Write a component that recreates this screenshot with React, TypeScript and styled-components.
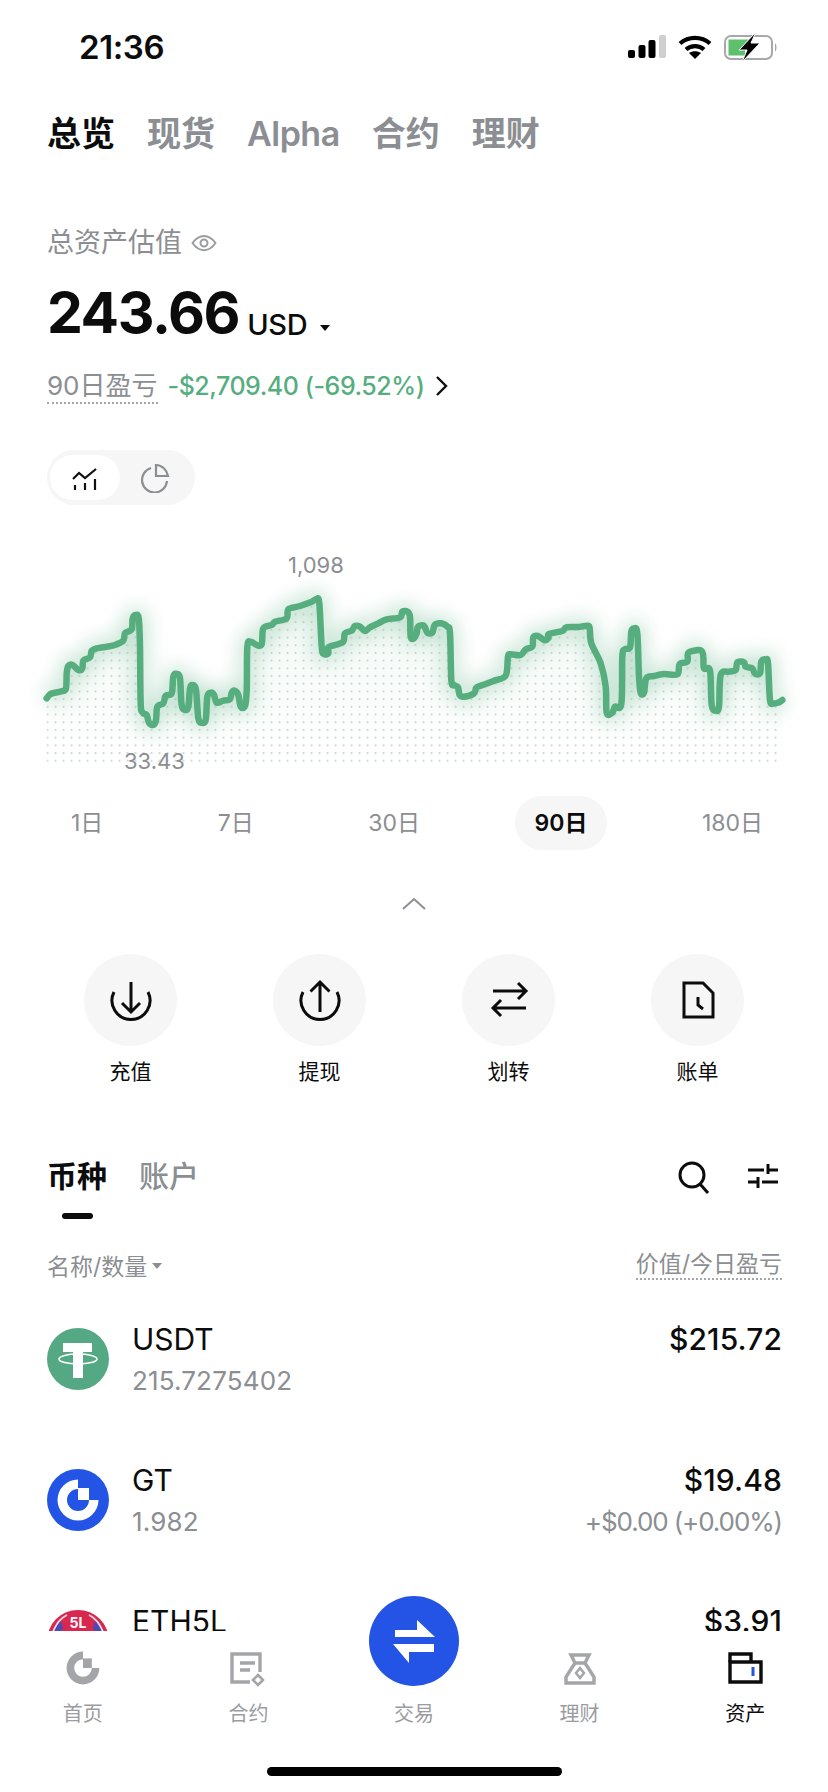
import styled, { createGlobalStyle } from "styled-components";

const GlobalStyle = createGlobalStyle`
	html, body {
		margin: 0;
		padding: 0;
		background: #fff;
	}
	body {
		font-family: Inter, "Noto Sans CJK SC", sans-serif;
		color: #0c0c0c;
	}
`;

const GRAY = "#8b8e92";
const GREEN = "#56ae7f";
const BLUE = "#2354e6";

const Page = styled("div")`
	width: 828px;
	height: 1792px;
	display: flex;
	flex-direction: column;
	position: relative;
	overflow: hidden;
	background: #fff;
`;

const Scroll = styled("main")`
	flex: 1;
	min-height: 0;
`;

const StatusBar = styled("div")`
	height: 92px;
	display: flex;
	align-items: center;
	justify-content: space-between;
	padding: 2px 50px 0 79px;
	box-sizing: border-box;
`;

const Time = styled("span")`
	font-size: 33px;
	font-weight: 600;
	letter-spacing: -0.4px;
`;

const StatusIcons = styled("div")`
	display: flex;
	align-items: center;
	gap: 12px;
`;

const TopTabs = styled("nav")`
	height: 84px;
	display: flex;
	align-items: center;
	gap: 32px;
	padding: 0 47px;
`;

const TopTab = styled("span")<{ $active?: boolean; $latin?: boolean }>`
	font-size: 34px;
	font-weight: ${({ $active }) => ($active ? 700 : 600)};
	color: ${({ $active }) => ($active ? "#0c0c0c" : GRAY)};
	line-height: 44px;
	letter-spacing: ${({ $latin }) => ($latin ? "-0.5px" : "0")};
`;

const Summary = styled("section")`
	padding: 49px 47px 0;
`;

const TotalLabel = styled("div")`
	display: flex;
	align-items: center;
	gap: 9px;
	font-size: 27px;
	line-height: 36px;
	color: ${GRAY};
`;

const AmountRow = styled("div")`
	display: flex;
	align-items: baseline;
	gap: 8px;
	height: 68px;
	line-height: 68px;
	margin-top: 18px;
`;

const Amount = styled("span")`
	font-size: 57px;
	font-weight: 700;
	letter-spacing: -1.4px;
`;

const Currency = styled("span")`
	font-size: 29px;
	font-weight: 500;
	transform: translateY(2px);
	letter-spacing: -0.3px;
`;

const Caret = styled("i")<{ $size: number; $color: string; $shift: number }>`
	display: inline-block;
	width: 0;
	height: 0;
	margin-left: ${({ $size }) => $size}px;
	border-left: ${({ $size }) => $size}px solid transparent;
	border-right: ${({ $size }) => $size}px solid transparent;
	border-top: ${({ $size }) => $size + 1}px solid ${({ $color }) => $color};
	transform: translateY(${({ $shift }) => $shift}px);
`;

const PnlRow = styled("div")`
	display: flex;
	align-items: center;
	gap: 10px;
	height: 36px;
	margin-top: 21px;
	font-size: 26px;
`;

const DottedLabel = styled("span")`
	color: ${GRAY};
	border-bottom: 2px dotted #a4a6a9;
	line-height: 33px;
`;

const PnlValue = styled("span")`
	color: ${GREEN};
	font-weight: 500;
	font-size: 25px;
	letter-spacing: -0.45px;
`;

const ViewToggle = styled("div")`
	width: 148px;
	height: 55px;
	margin-top: 46px;
	padding: 5px 3px;
	box-sizing: border-box;
	display: flex;
	align-items: stretch;
	background: #f6f6f6;
	border-radius: 28px;
`;

const ToggleItem = styled("div")<{ $active?: boolean }>`
	width: 70px;
	display: flex;
	align-items: center;
	justify-content: center;
	border-radius: 23px;
	background: ${({ $active }) => ($active ? "#fff" : "transparent")};
`;

const ChartBox = styled("div")`
	position: relative;
	height: 260px;
	margin-top: 25px;
	svg {
		display: block;
	}
`;

const ChartLabel = styled("span")<{ $left: number; $top: number }>`
	position: absolute;
	left: ${({ $left }) => $left}px;
	top: ${({ $top }) => $top}px;
	font-size: 22px;
	line-height: 28px;
	color: ${GRAY};
`;

const Ranges = styled("div")`
	height: 54px;
	margin-top: 6px;
	padding: 0 45px 0 51px;
	display: flex;
	justify-content: space-between;
`;

const Range = styled("span")<{ $active?: boolean }>`
	padding: 0 20px 4px;
	display: flex;
	align-items: center;
	border-radius: 27px;
	font-size: 23px;
	font-weight: ${({ $active }) => ($active ? 600 : 400)};
	color: ${({ $active }) => ($active ? "#0c0c0c" : GRAY)};
	background: ${({ $active }) => ($active ? "#f6f6f6" : "transparent")};
`;

const Collapse = styled("div")`
	height: 40px;
	margin-top: 34px;
	display: flex;
	align-items: center;
	justify-content: center;
`;

const Actions = styled("div")`
	display: grid;
	grid-template-columns: repeat(4, 189px);
	margin-top: 30px;
	padding-left: 36px;
`;

const Action = styled("div")`
	display: flex;
	flex-direction: column;
	align-items: center;
	gap: 11px;
	font-size: 21px;
	line-height: 30px;
`;

const ActionCircle = styled("div")`
	width: 93px;
	height: 92px;
	display: flex;
	align-items: center;
	justify-content: center;
	background: #f6f6f6;
	border-radius: 50%;
`;

const AssetHeader = styled("div")`
	height: 64px;
	margin-top: 68px;
	padding: 0 50px 0 47px;
	display: flex;
	justify-content: space-between;
`;

const AssetTabs = styled("div")`
	display: flex;
	gap: 32px;
`;

const AssetTab = styled("div")<{ $active?: boolean }>`
	position: relative;
	font-size: 30px;
	line-height: 42px;
	height: 42px;
	font-weight: ${({ $active }) => ($active ? 600 : 500)};
	color: ${({ $active }) => ($active ? "#0c0c0c" : GRAY)};
	&::after {
		content: "";
		display: ${({ $active }) => ($active ? "block" : "none")};
		position: absolute;
		left: 15px;
		top: 58px;
		width: 31px;
		height: 6px;
		border-radius: 3px;
		background: #0c0c0c;
	}
`;

const AssetTools = styled("div")`
	display: flex;
	align-items: flex-start;
	gap: 38px;
	padding-top: 6px;
`;

const ColumnHead = styled("div")`
	height: 30px;
	margin-top: 31px;
	padding: 0 46px 0 47px;
	display: flex;
	justify-content: space-between;
	align-items: center;
	font-size: 23px;
	color: ${GRAY};
`;

const SortLabel = styled("span")`
	display: flex;
	align-items: center;
`;

const ValueLabel = styled("span")`
	line-height: 28px;
	border-bottom: 2px dotted #a4a6a9;
`;

const AssetList = styled("div")`
	margin-top: 8px;
`;

const AssetRow = styled("div")`
	height: 141px;
	padding: 0 46px 0 47px;
	display: flex;
	align-items: center;
	gap: 23px;
`;

const CoinIcon = styled("div")`
	width: 62px;
	height: 62px;
	flex: none;
	svg {
		display: block;
	}
`;

const CoinInfo = styled("div")`
	flex: 1;
	display: flex;
	justify-content: space-between;
`;

const CoinCol = styled("div")<{ $right?: boolean }>`
	display: flex;
	flex-direction: column;
	gap: 4px;
	align-items: ${({ $right }) => ($right ? "flex-end" : "flex-start")};
`;

const CoinMain = styled("span")<{ $strong?: boolean }>`
	font-size: 30px;
	line-height: 38px;
	transform: translateY(1px);
	letter-spacing: ${({ $strong }) => ($strong ? "0.1px" : "0")};
	font-weight: ${({ $strong }) => ($strong ? 500 : 400)};
`;

const CoinSub = styled("span")<{ $tight?: boolean }>`
	font-size: 26px;
	line-height: 38px;
	min-height: 38px;
	transform: translateY(1px);
	letter-spacing: ${({ $tight }) => ($tight ? "-1.1px" : "0.15px")};
	color: ${GRAY};
`;

const BottomNav = styled("nav")`
	height: 161px;
	flex: none;
	position: relative;
	z-index: 1;
	background: #fff;
	display: grid;
	grid-template-columns: repeat(5, 1fr);
	box-sizing: border-box;
	padding-top: 17px;
	align-items: start;
`;

const NavItem = styled("div")<{ $active?: boolean }>`
	display: flex;
	flex-direction: column;
	align-items: center;
	gap: 11px;
	font-size: 20px;
	line-height: 30px;
	color: ${({ $active }) => ($active ? "#0c0c0c" : "#9a9c9f")};
`;

const NavIconSlot = styled("div")`
	width: 40px;
	height: 40px;
`;

const Fab = styled("div")`
	position: absolute;
	left: 369px;
	top: -35px;
	width: 90px;
	height: 90px;
	border-radius: 50%;
	background: ${BLUE};
`;

const HomeBar = styled("div")`
	position: absolute;
	left: 267px;
	bottom: 16px;
	width: 295px;
	height: 9px;
	border-radius: 5px;
	background: #000;
`;

// line traced from the reference, x/3 and 530+y/3 gives page px
const LEFT: [number, number][] = [
	[140, 505], [150, 493], [165, 488], [185, 484], [198, 475], [200, 430], [205, 408], [218, 405], [235, 420], [247, 415],
	[250, 392], [270, 382], [275, 362], [290, 355], [320, 350], [345, 345], [370, 332], [375, 310], [395, 298], [398, 265],
	[407, 255], [416, 265], [420, 350], [422, 520], [428, 548], [440, 555], [447, 578], [460, 585], [468, 570], [472, 530],
	[490, 520], [497, 497], [515, 490], [520, 440], [530, 432], [540, 445], [545, 525], [555, 540], [565, 530], [570, 475],
	[578, 465], [588, 480], [595, 565], [605, 578], [617, 570], [622, 500], [632, 488], [642, 495], [650, 518], [670, 512],
	[690, 508], [695, 488], [705, 482], [715, 495], [722, 530], [735, 528], [740, 480], [742, 350], [752, 335], [770, 345],
	[785, 342], [790, 295], [815, 285], [825, 275], [860, 265], [865, 238], [900, 228], [935, 215], [950, 207], [958, 220],
	[965, 350], [972, 372], [985, 370], [985, 352], [1005, 345], [1030, 335], [1035, 310], [1055, 302], [1065, 288], [1080, 290],
	[1095, 303], [1110, 292], [1135, 280], [1160, 268], [1200, 262], [1207, 245], [1222, 245], [1230, 260], [1232, 320],
];

const RIGHT: [number, number][] = [
	[0, 325], [8, 310], [12, 290], [30, 287], [40, 308], [55, 308], [62, 285], [80, 280], [100, 290], [108, 310],
	[112, 450], [120, 465], [132, 472], [137, 495], [150, 500], [180, 490], [188, 472], [215, 462], [240, 452], [275, 437],
	[282, 380], [290, 373], [320, 375], [335, 358], [355, 350], [358, 322], [372, 318], [390, 330], [403, 325], [405, 312],
	[445, 303], [457, 292], [495, 291], [520, 287], [527, 295], [532, 340], [560, 400], [575, 470], [578, 548], [595, 548],
	[603, 530], [622, 522], [625, 380], [632, 358], [648, 352], [652, 305], [660, 296], [670, 310], [675, 440], [680, 488],
	[690, 488], [697, 445], [720, 438], [750, 432], [790, 433], [797, 402], [820, 395], [822, 370], [840, 362], [862, 362],
	[868, 380], [870, 415], [888, 422], [893, 525], [905, 542], [915, 530], [920, 435], [945, 425], [965, 420], [970, 397],
	[990, 397], [995, 410], [1015, 415], [1022, 430], [1038, 430], [1042, 395], [1055, 388], [1062, 400], [1068, 510], [1078, 520],
	[1095, 517], [1105, 510],
];

const POINTS = [
	...LEFT.map(([x, y]) => [x / 3, 530 + y / 3]),
	...RIGHT.map(([x, y]) => [414 + x / 3, 530 + y / 3]),
];

const smoothPath = (pts: number[][]) => {
	let d = `M${pts[0][0]} ${pts[0][1]}`;
	for (let i = 0; i < pts.length - 1; i++) {
		const p0 = pts[Math.max(i - 1, 0)];
		const p1 = pts[i];
		const p2 = pts[i + 1];
		const p3 = pts[Math.min(i + 2, pts.length - 1)];
		const c1x = p1[0] + (p2[0] - p0[0]) / 6;
		const c1y = p1[1] + (p2[1] - p0[1]) / 6;
		const c2x = p2[0] - (p3[0] - p1[0]) / 6;
		const c2y = p2[1] - (p3[1] - p1[1]) / 6;
		d += `C${c1x.toFixed(1)} ${c1y.toFixed(1)} ${c2x.toFixed(1)} ${c2y.toFixed(1)} ${p2[0].toFixed(1)} ${p2[1].toFixed(1)}`;
	}
	return d;
};

const Chart = () => {
	const line = smoothPath(POINTS);
	const last = POINTS[POINTS.length - 1];
	const area = `${line}L${last[0]} 764L${POINTS[0][0]} 764Z`;
	return (
		<svg width="828" height="260" viewBox="0 530 828 260">
			<defs>
				<pattern id="dots" x="46.5" y="682.7" width="8" height="7.7" patternUnits="userSpaceOnUse">
					<circle cx="1" cy="1" r="1.050" fill="#a9bfb3" />
				</pattern>
				<linearGradient id="fade" x1="0" y1="0" x2="0" y2="1">
					<stop offset="0" stopColor={GREEN} stopOpacity="0.08" />
					<stop offset="1" stopColor={GREEN} stopOpacity="0" />
				</linearGradient>
				<filter id="glow" x="-5%" y="-30%" width="110%" height="160%">
					<feGaussianBlur stdDeviation="10" />
				</filter>
				<clipPath id="under">
					<path d={area} />
				</clipPath>
			</defs>
			<path d={line} fill="none" stroke={GREEN} strokeWidth="14" opacity="0.36" filter="url(#glow)" />
			<path d={area} fill="url(#fade)" />
			<rect x="46" y="590" width="738" height="174" fill="url(#dots)" clipPath="url(#under)" opacity="0.62" />
			<path d={line} fill="none" stroke={GREEN} strokeWidth="6.500" strokeLinecap="round" strokeLinejoin="round" />
		</svg>
	);
};

const StatusGlyphs = () => (
	<StatusIcons>
		<svg width="38" height="24" viewBox="0 0 38 24">
			<rect x="0" y="15" width="7" height="8" rx="2" fill="#000" />
			<rect x="10.500" y="10" width="7" height="13" rx="2" fill="#000" />
			<rect x="20.500" y="5" width="7" height="18" rx="2" fill="#000" />
			<rect x="31" y="0" width="7" height="23" rx="2" fill="#cfcfcf" />
		</svg>
		<svg width="34" height="24" viewBox="0 0 34 24">
			<path d="M2 8.500C10.500 1 23.500 1 32 8.500" fill="none" stroke="#000" strokeWidth="4.200" />
			<path d="M8 14.500C13 10 21 10 26 14.500" fill="none" stroke="#000" strokeWidth="4.200" />
			<path d="M17 24L11 18C14.500 15.500 19.500 15.500 23 18Z" fill="#000" />
		</svg>
		<svg width="54" height="30" viewBox="0 0 54 30">
			<rect x="1" y="4" width="47" height="23" rx="6" fill="none" stroke="#a8a8a8" strokeWidth="2" />
			<path d="M4.500 7.500H25L17 17H21V23.500H4.500Z" fill="#5cc06c" />
			<path d="M51 11.500C53 12.500 53 18.500 51 19.500Z" fill="#a8a8a8" />
			<path d="M32 0L15 18H23L18 30L36 11H27Z" fill="#000" stroke="#fff" strokeWidth="1" />
		</svg>
	</StatusIcons>
);

const EyeIcon = () => (
	<svg width="26" height="26" viewBox="0 0 26 26" fill="none" stroke="#9b9da0" strokeWidth="2">
		<path d="M1.500 13C8 3.500 18 3.500 24.500 13C18 22.500 8 22.500 1.500 13Z" />
		<circle cx="13" cy="13" r="3.500" />
	</svg>
);

const ChevronRight = () => (
	<svg width="16" height="24" viewBox="0 0 16 24" fill="none" stroke="#111" strokeWidth="2.400">
		<path d="M3 3L12 12L3 21" />
	</svg>
);

const LineChartIcon = () => (
	<svg width="28" height="28" viewBox="0 0 28 28" fill="none" stroke="#111" strokeWidth="2.200">
		<path d="M2 15L8 9L14 14L25 5" />
		<path d="M4 21V26M14 19V26M24 15V26" />
	</svg>
);

const PieIcon = () => (
	<svg width="30" height="30" viewBox="0 0 30 30" fill="none" stroke="#8b8e92" strokeWidth="2.200">
		<path d="M11 5A12.500 12.500 0 1 0 27 18" />
		<path d="M16 2C22 2 27 7 28 13H16Z" />
	</svg>
);

const ActionIcon = ({ children }: { children: React.ReactNode }) => (
	<svg width="48" height="48" viewBox="0 0 48 48" fill="none" stroke="#0c0c0c" strokeWidth="3">
		{children}
	</svg>
);

const GateMark = ({ color }: { color: string }) => (
	<>
		<path d="M31 10.500A20.500 20.500 0 1 0 51.500 31H42A11 11 0 1 1 31 20Z" fill={color} />
		<rect x="31" y="19" width="11" height="12" fill={color} />
	</>
);

const TetherLogo = () => (
	<svg width="62" height="62" viewBox="0 0 62 62">
		<circle cx="31" cy="31" r="31" fill="#54a883" />
		<path d="M16 15H45V24H36V50H26V24H16Z" fill="#fff" />
		<ellipse cx="31" cy="31" rx="19" ry="5" fill="none" stroke="#fff" strokeWidth="1.600" />
	</svg>
);

const GateLogo = () => (
	<svg width="62" height="62" viewBox="0 0 62 62">
		<circle cx="31" cy="31" r="31" fill={BLUE} />
		<GateMark color="#fff" />
	</svg>
);

const EthLogo = () => (
	<svg width="62" height="62" viewBox="0 0 62 62">
		<circle cx="31" cy="31" r="31" fill="#d8284f" />
		<path d="M2 25L13 10L18 22H44L49 10L60 25V34H2Z" fill="#4a49b8" />
		<path d="M14 22C16 10 46 10 48 22" fill="#d8284f" />
		<path d="M5 24C10 12 14 8 20 5M57 24C52 12 48 8 42 5" fill="none" stroke="#f7dbe2" strokeWidth="1.600" />
		<text x="31" y="18" textAnchor="middle" fontFamily="Inter, sans-serif" fontSize="14" fontWeight="700" fill="#fff">
			5L
		</text>
	</svg>
);

const HomeIcon = () => (
	<svg width="40" height="40" viewBox="6 6 50 50">
		<GateMark color="#a3a5a8" />
	</svg>
);

const ContractIcon = () => (
	<svg width="40" height="40" viewBox="0 0 40 40" fill="none" stroke="#a3a5a8" strokeWidth="3.400">
		<path d="M32 24V6H4V34H22" />
		<path d="M12 15H27M12 22H22" />
		<path d="M30 27L35 32L30 37L25 32Z" strokeWidth="2.600" />
	</svg>
);

const EarnIcon = () => (
	<svg width="40" height="40" viewBox="0 0 40 40" fill="none" stroke="#a3a5a8" strokeWidth="3.400">
		<path d="M11 7H29L25 15H15Z" />
		<path d="M15 15L6 29V35H34V29L25 15" />
		<path d="M20 20L24 25L20 30L16 25Z" strokeWidth="2.400" />
	</svg>
);

const WalletIcon = () => (
	<svg width="40" height="40" viewBox="0 0 40 40" fill="none" stroke="#0c0c0c" strokeWidth="3.400">
		<path d="M5 14V6H26V14" />
		<path d="M5 14H36V34H5Z" />
		<rect x="26.500" y="19" width="3" height="9" fill={BLUE} stroke="none" />
	</svg>
);

const RANGES = ["1日", "7日", "30日", "90日", "180日"];

const App = () => {
	return (
		<Page>
			<GlobalStyle />
			<Scroll>
				<StatusBar>
					<Time>21:36</Time>
					<StatusGlyphs />
				</StatusBar>
				<TopTabs>
					<TopTab $active>总览</TopTab>
					<TopTab>现货</TopTab>
					<TopTab $latin>Alpha</TopTab>
					<TopTab>合约</TopTab>
					<TopTab>理财</TopTab>
				</TopTabs>
				<Summary>
					<TotalLabel>
						总资产估值
						<EyeIcon />
					</TotalLabel>
					<AmountRow>
						<Amount>243.66</Amount>
						<Currency>USD</Currency>
						<Caret $size={5} $color="#0c0c0c" $shift={-2} />
					</AmountRow>
					<PnlRow>
						<DottedLabel>90日盈亏</DottedLabel>
						<PnlValue>-$2,709.40 (-69.52%)</PnlValue>
						<ChevronRight />
					</PnlRow>
					<ViewToggle>
						<ToggleItem $active>
							<LineChartIcon />
						</ToggleItem>
						<ToggleItem>
							<PieIcon />
						</ToggleItem>
					</ViewToggle>
				</Summary>
				<ChartBox>
					<Chart />
					<ChartLabel $left={288} $top={21}>1,098</ChartLabel>
					<ChartLabel $left={124} $top={217}>33.43</ChartLabel>
				</ChartBox>
				<Ranges>
					{RANGES.map((r) => (
						<Range key={r} $active={r === "90日"}>
							{r}
						</Range>
					))}
				</Ranges>
				<Collapse>
					<svg width="26" height="14" viewBox="0 0 26 14" fill="none" stroke="#8b8e92" strokeWidth="2">
						<path d="M2 12L13 2L24 12" />
					</svg>
				</Collapse>
				<Actions>
					<Action>
						<ActionCircle>
							<ActionIcon>
								<path d="M7 16A19 19 0 1 0 41 16" />
								<path d="M24 6V36M15 27L24 36L33 27" />
							</ActionIcon>
						</ActionCircle>
						充值
					</Action>
					<Action>
						<ActionCircle>
							<ActionIcon>
								<path d="M7 16A19 19 0 1 0 41 16" />
								<path d="M24 36V6M14.500 15.500L24 6L33.500 15.500" />
							</ActionIcon>
						</ActionCircle>
						提现
					</Action>
					<Action>
						<ActionCircle>
							<ActionIcon>
								<path d="M8 15H41M33 7L41 15L33 23" />
								<path d="M41 32H8M16 24L8 32L16 40" />
							</ActionIcon>
						</ActionCircle>
						划转
					</Action>
					<Action>
						<ActionCircle>
							<ActionIcon>
								<path d="M10 7H29L39 17V41H10Z" />
								<path d="M24 21V29L29 33" />
							</ActionIcon>
						</ActionCircle>
						账单
					</Action>
				</Actions>
				<AssetHeader>
					<AssetTabs>
						<AssetTab $active>币种</AssetTab>
						<AssetTab>账户</AssetTab>
					</AssetTabs>
					<AssetTools>
						<svg width="32" height="34" viewBox="0 0 32 34" fill="none" stroke="#0c0c0c" strokeWidth="3">
							<circle cx="14" cy="14" r="12" />
							<path d="M22 23L30 32" />
						</svg>
						<svg width="30" height="30" viewBox="0 0 30 30" fill="none" stroke="#0c0c0c" strokeWidth="3">
							<path d="M0 9H16M21 9H30M20 3V13" />
							<path d="M0 21H9M14 21H30M10 16V27" />
						</svg>
					</AssetTools>
				</AssetHeader>
				<ColumnHead>
					<SortLabel>
						名称/数量
						<Caret $size={5} $color="#8b8e92" $shift={1} />
					</SortLabel>
					<ValueLabel>价值/今日盈亏</ValueLabel>
				</ColumnHead>
				<AssetList>
					<AssetRow>
						<CoinIcon>
							<TetherLogo />
						</CoinIcon>
						<CoinInfo>
							<CoinCol>
								<CoinMain>USDT</CoinMain>
								<CoinSub>215.7275402</CoinSub>
							</CoinCol>
							<CoinCol $right>
								<CoinMain $strong>$215.72</CoinMain>
								<CoinSub />
							</CoinCol>
						</CoinInfo>
					</AssetRow>
					<AssetRow>
						<CoinIcon>
							<GateLogo />
						</CoinIcon>
						<CoinInfo>
							<CoinCol>
								<CoinMain>GT</CoinMain>
								<CoinSub>1.982</CoinSub>
							</CoinCol>
							<CoinCol $right>
								<CoinMain $strong>$19.48</CoinMain>
								<CoinSub $tight>+$0.00 (+0.00%)</CoinSub>
							</CoinCol>
						</CoinInfo>
					</AssetRow>
					<AssetRow>
						<CoinIcon>
							<EthLogo />
						</CoinIcon>
						<CoinInfo>
							<CoinCol>
								<CoinMain>ETH5L</CoinMain>
								<CoinSub />
							</CoinCol>
							<CoinCol $right>
								<CoinMain $strong>$3.91</CoinMain>
								<CoinSub />
							</CoinCol>
						</CoinInfo>
					</AssetRow>
				</AssetList>
			</Scroll>
			<BottomNav>
				<NavItem>
					<NavIconSlot>
						<HomeIcon />
					</NavIconSlot>
					首页
				</NavItem>
				<NavItem>
					<NavIconSlot>
						<ContractIcon />
					</NavIconSlot>
					合约
				</NavItem>
				<NavItem>
					<NavIconSlot />
					交易
				</NavItem>
				<NavItem>
					<NavIconSlot>
						<EarnIcon />
					</NavIconSlot>
					理财
				</NavItem>
				<NavItem $active>
					<NavIconSlot>
						<WalletIcon />
					</NavIconSlot>
					资产
				</NavItem>
				<Fab>
					<svg width="90" height="90" viewBox="0 0 90 90" fill="#fff">
						<path d="M26 34H48V24L66 41H26Z" />
						<path d="M24 48H65V56H40V67Z" />
					</svg>
				</Fab>
				<HomeBar />
			</BottomNav>
		</Page>
	);
};

export default App;
